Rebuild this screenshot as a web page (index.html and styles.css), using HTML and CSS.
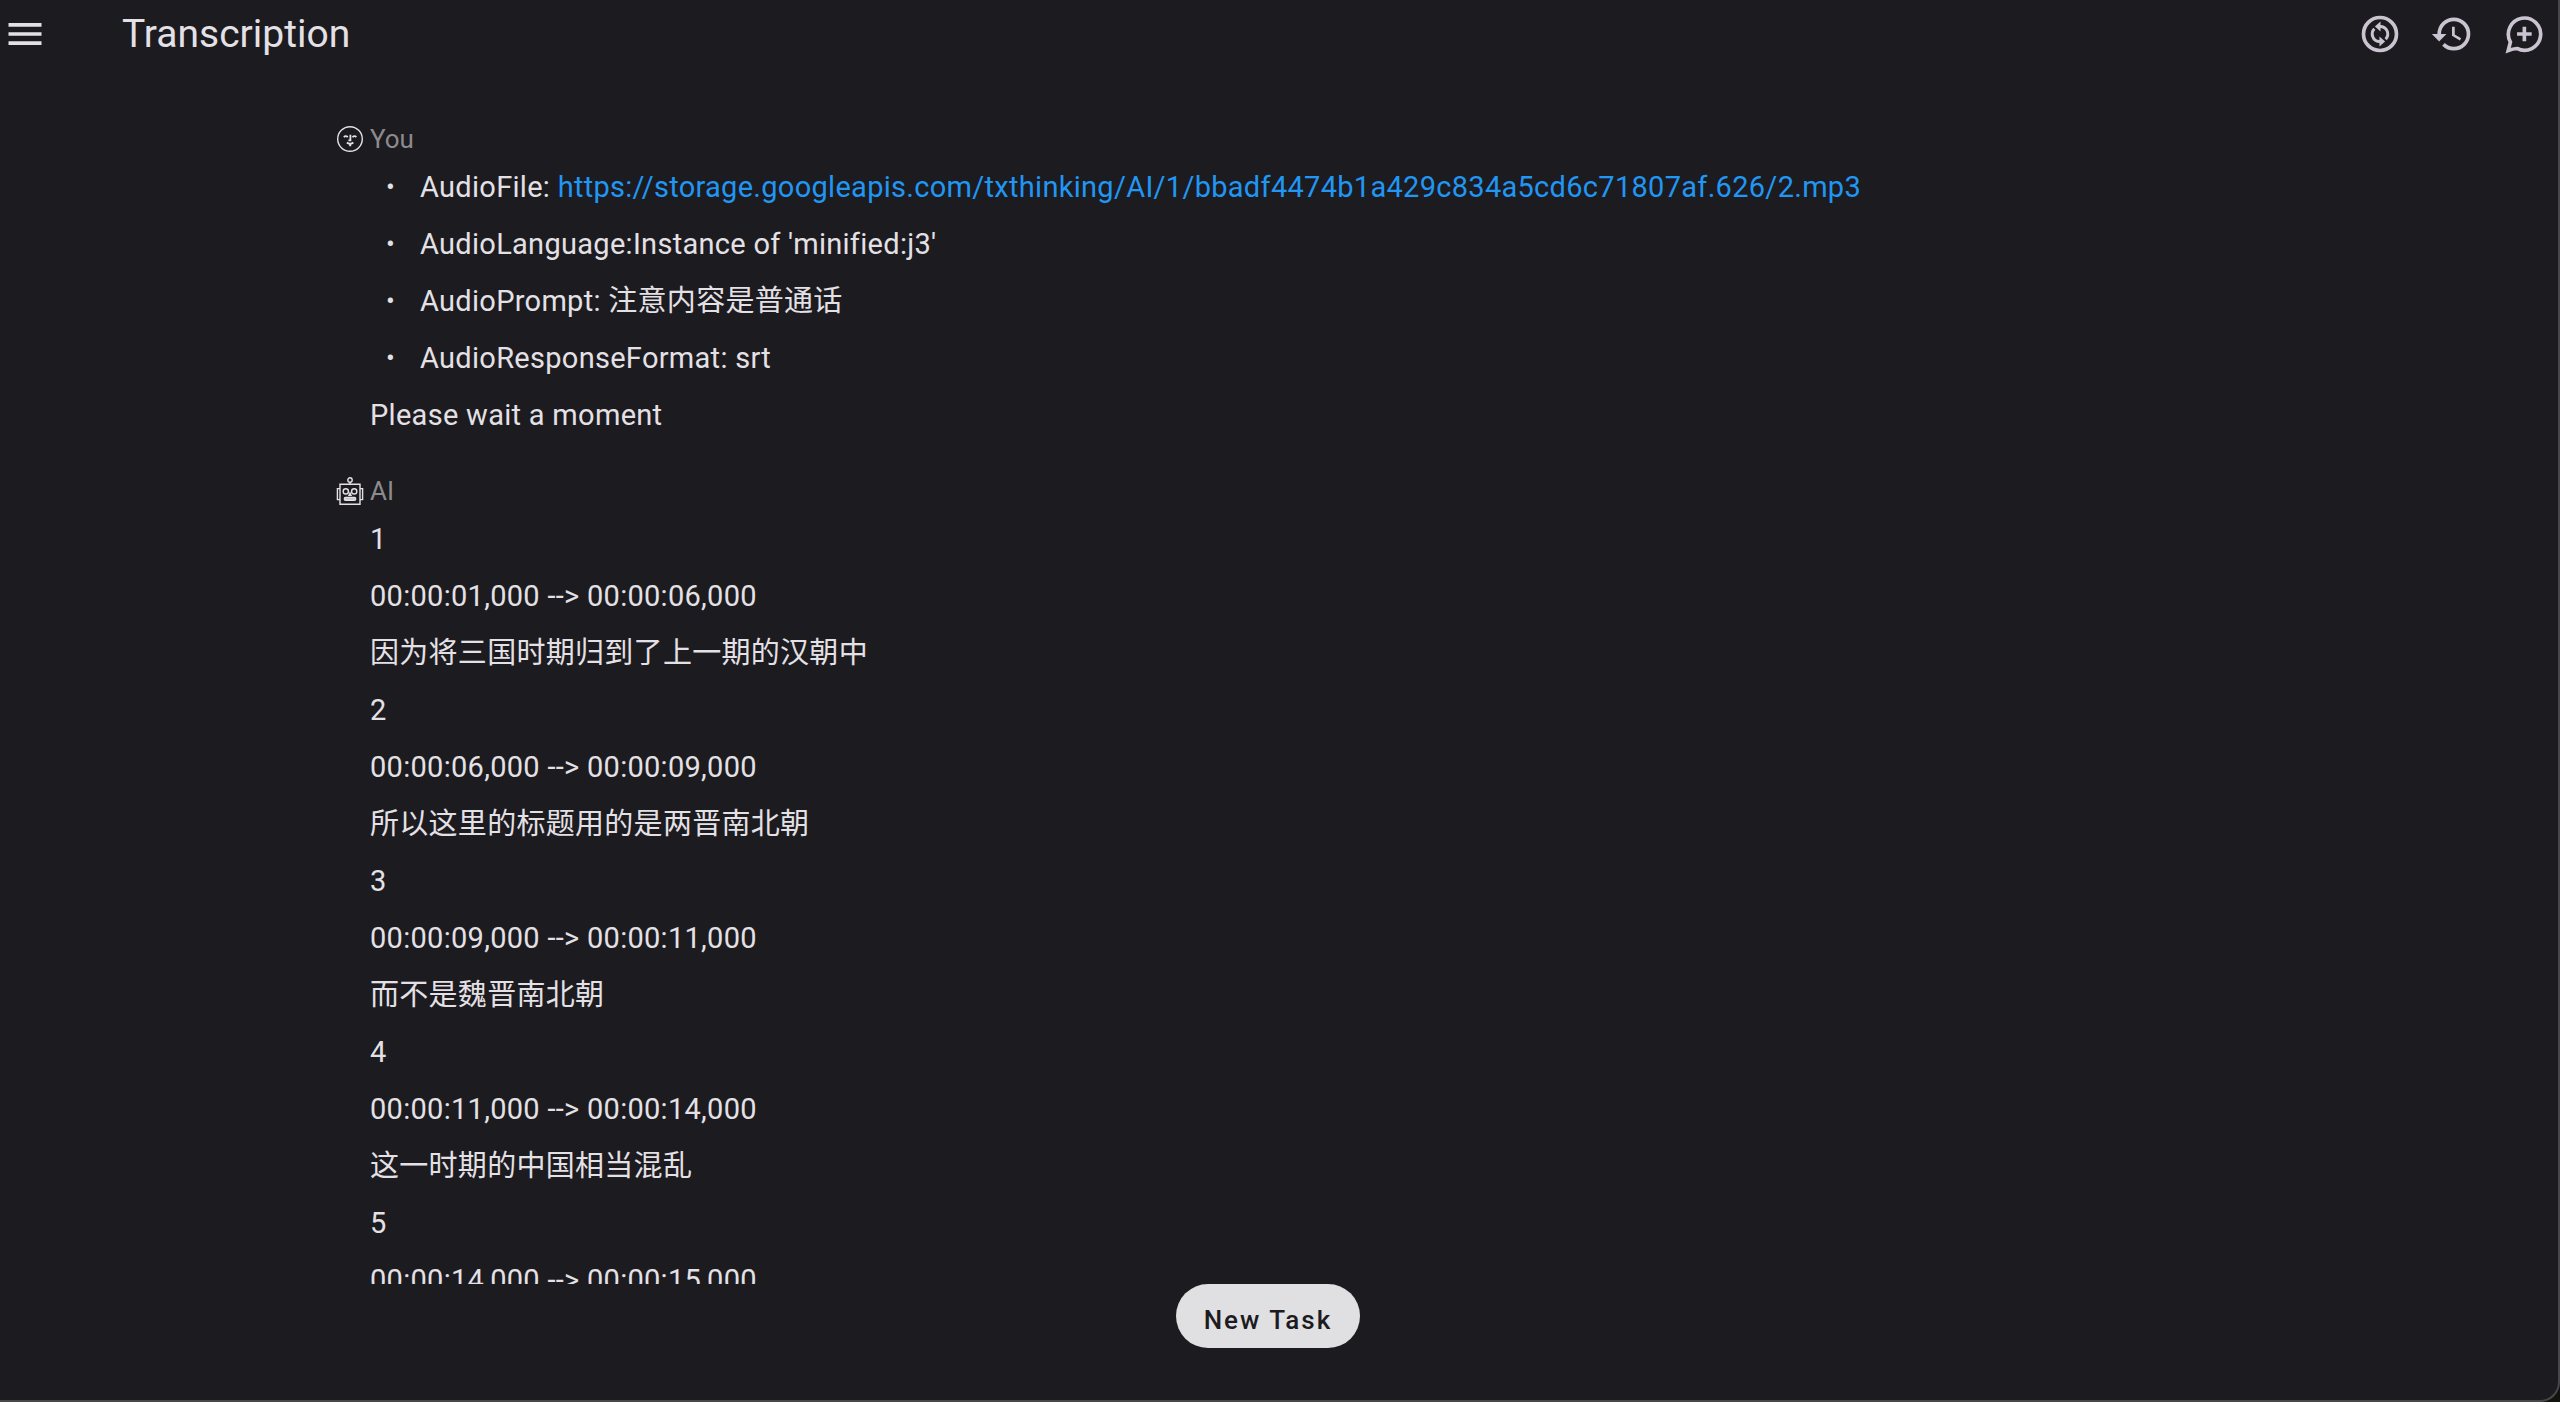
FILE: index.html
```
<!DOCTYPE html>
<html lang="en">
<head>
    <meta charset="UTF-8">
    <meta name="viewport" content="width=device-width, initial-scale=1.0">
    <title>Transcription</title>
    <link rel="stylesheet" href="styles.css">
</head>
<body>
    <div class="app">
        <header class="topbar">
            <button class="icon-button" type="button" aria-label="Menu">
                <svg class="icon" viewBox="0 0 24 24"><path d="M3 18h18v-2H3v2zm0-5h18v-2H3v2zm0-7v2h18V6H3z"/></svg>
            </button>
            <h1>Transcription</h1>
            <div class="actions">
                <button class="icon-button" type="button" aria-label="Sync">
                    <svg class="icon" viewBox="0 0 24 24">
                        <circle class="line" cx="12" cy="12" r="9"/>
                        <path class="line thin" d="M8.9 9.2a4.1 4.1 0 0 0 2.6 6.9h1M15.1 14.8a4.1 4.1 0 0 0-2.6-6.9h-1"/>
                        <path d="M12.3 5.2v5.4L9.2 7.9zM11.7 18.8v-5.4l3.1 2.7z"/>
                    </svg>
                </button>
                <button class="icon-button" type="button" aria-label="History">
                    <svg class="icon" viewBox="0 0 24 24"><path d="M13 3a9 9 0 0 0-9 9H1l3.89 3.89.07.14L9 12H6c0-3.87 3.13-7 7-7s7 3.13 7 7-3.13 7-7 7c-1.93 0-3.68-.79-4.94-2.06l-1.42 1.42A8.954 8.954 0 0 0 13 21a9 9 0 0 0 0-18zm-1 5v5l4.28 2.54.72-1.21-3.5-2.08V8H12z"/></svg>
                </button>
                <button class="icon-button" type="button" aria-label="New chat">
                    <svg class="icon" viewBox="0 0 24 24">
                        <path class="line" d="M3.4 21 4.6 16.4A8.8 8.8 0 1 1 8.2 19.9Q6 20 3.4 21z"/>
                        <path d="M11.2 8h2v3h3v2h-3v3h-2v-3h-3v-2h3z"/>
                    </svg>
                </button>
            </div>
        </header>

        <main class="chat">
            <section class="message">
                <h2 class="author">
                    <svg class="avatar" viewBox="0 0 28 28">
                        <circle cx="14" cy="14" r="12.3"/>
                        <path class="face" d="M7.8 12q2-1.8 4 .2M16.4 12.2q2-2 4-.2M14.4 9.8v5.6h-2M10.8 17.6l2 1h2.6l2-1M13.2 20.4h2"/>
                    </svg>
                    You
                </h2>
                <div class="content">
                    <ul>
                        <li>AudioFile: <a href="https://storage.googleapis.com/txthinking/AI/1/bbadf4474b1a429c834a5cd6c71807af.626/2.mp3">https://storage.googleapis.com/txthinking/AI/1/bbadf4474b1a429c834a5cd6c71807af.626/2.mp3</a></li>
                        <li>AudioLanguage:Instance of 'minified:j3'</li>
                        <li>AudioPrompt: <span lang="zh">注意内容是普通话</span></li>
                        <li>AudioResponseFormat: srt</li>
                    </ul>
                    <p>Please wait a moment</p>
                </div>
            </section>

            <section class="message">
                <h2 class="author">
                    <svg class="avatar" viewBox="0 0 28 28">
                        <circle cx="14" cy="3" r="2.2"/>
                        <path d="M14 5.2v2.4M4 7.2h20v20H4zM4 11.6H1.4v11H4M24 11.6h2.6v11H24M14 16l-1 2.4h2z"/>
                        <circle cx="9.8" cy="14.4" r="2.6"/>
                        <circle cx="18.2" cy="14.4" r="2.6"/>
                        <rect class="mouth" x="8.4" y="20.4" width="11.2" height="2.8" rx="1"/>
                    </svg>
                    AI
                </h2>
                <div class="content">
                    <p>1</p>
                    <p>00:00:01,000 --&gt; 00:00:06,000</p>
                    <p lang="zh">因为将三国时期归到了上一期的汉朝中</p>
                    <p>2</p>
                    <p>00:00:06,000 --&gt; 00:00:09,000</p>
                    <p lang="zh">所以这里的标题用的是两晋南北朝</p>
                    <p>3</p>
                    <p>00:00:09,000 --&gt; 00:00:11,000</p>
                    <p lang="zh">而不是魏晋南北朝</p>
                    <p>4</p>
                    <p>00:00:11,000 --&gt; 00:00:14,000</p>
                    <p lang="zh">这一时期的中国相当混乱</p>
                    <p>5</p>
                    <p>00:00:14,000 --&gt; 00:00:15,000</p>
                </div>
            </section>
        </main>

        <footer class="bottom">
            <button class="new-task" type="button">New Task</button>
        </footer>
    </div>
</body>
</html>
```
FILE: styles.css
```
* {
    box-sizing: border-box;
    margin: 0;
    padding: 0;
}

body {
    background-color: #10140c;
    color: #e4e1e6;
    font-family: Roboto, "Noto Sans CJK SC", sans-serif;
    font-size: 29px;
    letter-spacing: 0.01em;
}

.app {
    display: flex;
    flex-direction: column;
    height: 100vh;
    background-color: #1c1b1f;
    border-right: 2px solid #48464b;
    border-bottom: 2px solid #48464b;
    border-bottom-right-radius: 20px;
    overflow: hidden;
}

/* top bar */
.topbar {
    display: flex;
    align-items: center;
    height: 68px;
    padding: 0 12px 0 3px;
}

.topbar h1 {
    flex: 1;
    margin-left: 75px;
    font-size: 39px;
    font-weight: 400;
    line-height: 48px;
    letter-spacing: 0;
}

.actions {
    display: flex;
    gap: 28px;
}

.icon-button {
    width: 44px;
    height: 44px;
    border: none;
    background: none;
    color: inherit;
    cursor: pointer;
}

.actions .icon-button {
    color: #cac4d0;
}

.icon {
    display: block;
    width: 44px;
    height: 44px;
    fill: currentColor;
}

.icon .line {
    fill: none;
    stroke: currentColor;
    stroke-width: 2;
}

.icon .thin {
    stroke-width: 1.6;
}

/* messages */
.chat {
    flex: 1;
    min-height: 0;
    padding: 54px 22px 0 0;
    overflow: hidden;
}

.message {
    width: 1864px;
    max-width: 100%;
    margin: 0 auto 38px;
}

.author {
    display: flex;
    align-items: center;
    gap: 6px;
    height: 34px;
    color: #8c8b8e;
    font-size: 26px;
    font-weight: 400;
    letter-spacing: 0;
}

.avatar {
    width: 28px;
    height: 28px;
    fill: none;
    stroke: #e4e1e6;
    stroke-width: 1.4;
}

.avatar .face {
    stroke-width: 1.8;
}

.avatar .mouth {
    fill: #c9c6cb;
}

.content {
    padding: 11px 0 0 34px;
    line-height: 41px;
}

.content p,
.content li {
    margin-bottom: 16px;
}

ul {
    list-style: none;
}

li {
    display: flex;
    white-space: pre;
}

li::before {
    content: "•";
    flex: none;
    box-sizing: border-box;
    width: 50px;
    padding-left: 16px;
    font-size: 26px;
}

a {
    color: #2196f3;
    text-decoration: none;
}

/* bottom bar */
.bottom {
    display: flex;
    justify-content: center;
    height: 116px;
    padding-right: 22px;
}

.new-task {
    height: 64px;
    padding: 8px 28px 0;
    border: none;
    border-radius: 32px;
    background-color: #e0dfe1;
    color: #1c1b1f;
    font-family: inherit;
    font-size: 26px;
    font-weight: 500;
    letter-spacing: 2px;
    cursor: pointer;
}
```
